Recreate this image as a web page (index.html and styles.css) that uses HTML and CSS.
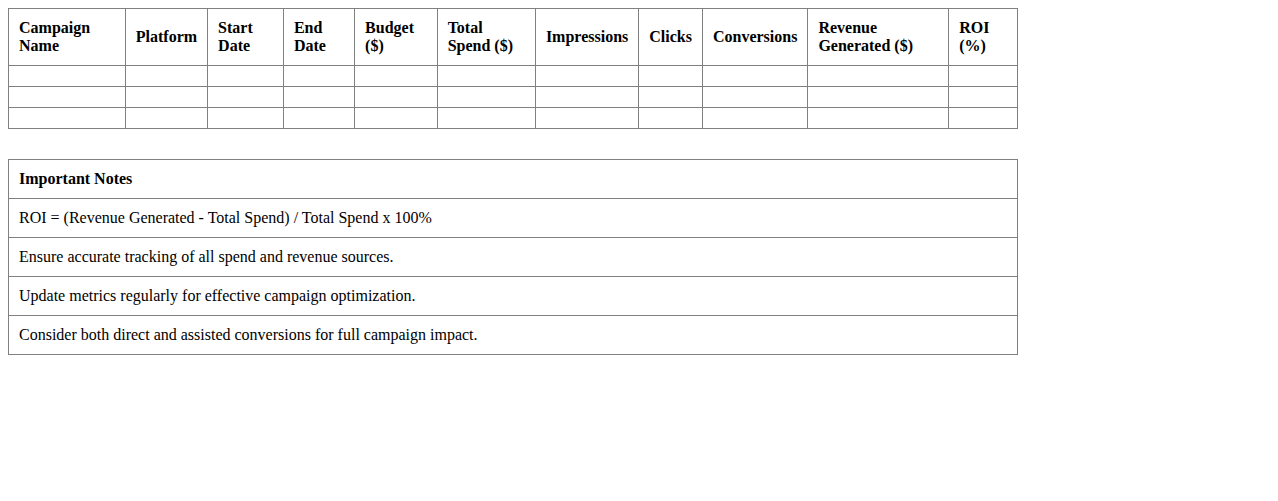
FILE: index.html
```html
<!DOCTYPE html>
<html>
<head>
<meta charset="utf-8">
<title>Campaign ROI</title>
<link rel="stylesheet" href="styles.css">
</head>
<body>
<table class="grid metrics">
  <thead>
    <tr>
      <th>Campaign Name</th>
      <th>Platform</th>
      <th>Start Date</th>
      <th>End Date</th>
      <th>Budget ($)</th>
      <th>Total Spend ($)</th>
      <th>Impressions</th>
      <th>Clicks</th>
      <th>Conversions</th>
      <th>Revenue Generated ($)</th>
      <th>ROI (%)</th>
    </tr>
  </thead>
  <tbody>
    <tr><td></td><td></td><td></td><td></td><td></td><td></td><td></td><td></td><td></td><td></td><td></td></tr>
    <tr><td></td><td></td><td></td><td></td><td></td><td></td><td></td><td></td><td></td><td></td><td></td></tr>
    <tr><td></td><td></td><td></td><td></td><td></td><td></td><td></td><td></td><td></td><td></td><td></td></tr>
  </tbody>
</table>
<table class="grid notes">
  <tr><th>Important Notes</th></tr>
  <tr><td>ROI = (Revenue Generated - Total Spend) / Total Spend x 100%</td></tr>
  <tr><td>Ensure accurate tracking of all spend and revenue sources.</td></tr>
  <tr><td>Update metrics regularly for effective campaign optimization.</td></tr>
  <tr><td>Consider both direct and assisted conversions for full campaign impact.</td></tr>
</table>
</body>
</html>
```
FILE: styles.css
```css
body {
  margin: 8px;
  font-family: "Liberation Serif", "Times New Roman", serif;
  font-size: 16px;
  color: #000;
  background: #fff;
}
.grid {
  width: 80%;
  border-collapse: collapse;
}
.grid th,
.grid td {
  border: 1px solid #808080;
  padding: 10px;
  text-align: left;
  vertical-align: middle;
}
.grid th {
  font-weight: bold;
}
.metrics {
  margin-bottom: 30px;
}
```
